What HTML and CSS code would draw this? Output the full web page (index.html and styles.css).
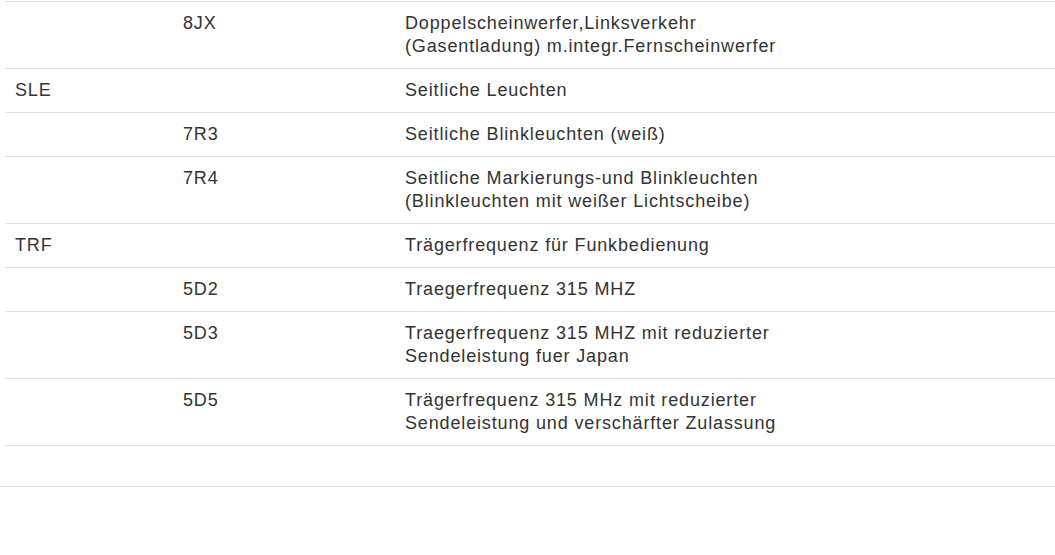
FILE: index.html
```html
<!DOCTYPE html>
<html lang="de">
<head>
<meta charset="utf-8">
<link rel="stylesheet" href="styles.css">
</head>
<body>
<div class="wrap">
  <table class="codes">
    <colgroup><col class="c1"><col class="c2"><col class="c3"></colgroup>
    <tbody>
      <tr><td></td><td>8JX</td><td>Doppelscheinwerfer,Linksverkehr<br>(Gasentladung) m.integr.Fernscheinwerfer</td></tr>
      <tr><td>SLE</td><td></td><td>Seitliche Leuchten</td></tr>
      <tr><td></td><td>7R3</td><td>Seitliche Blinkleuchten (weiß)</td></tr>
      <tr><td></td><td>7R4</td><td>Seitliche Markierungs-und Blinkleuchten<br>(Blinkleuchten mit weißer Lichtscheibe)</td></tr>
      <tr><td>TRF</td><td></td><td>Trägerfrequenz für Funkbedienung</td></tr>
      <tr><td></td><td>5D2</td><td>Traegerfrequenz 315 MHZ</td></tr>
      <tr><td></td><td>5D3</td><td>Traegerfrequenz 315 MHZ mit reduzierter<br>Sendeleistung fuer Japan</td></tr>
      <tr><td></td><td>5D5</td><td>Trägerfrequenz 315 MHz mit reduzierter<br>Sendeleistung und verschärfter Zulassung</td></tr>
    </tbody>
  </table>
</div>
<div class="spacer"></div>
</body>
</html>
```
FILE: styles.css
```css
html, body {
  margin: 0;
  padding: 0;
  background: #fff;
}
body {
  font-family: "Liberation Sans", Arial, sans-serif;
  font-size: 18px;
  line-height: 23px;
  letter-spacing: 0.85px;
  color: #333;
}
.wrap {
  padding: 1px 0 0 5px;
}
.codes {
  width: 100%;
  border-collapse: collapse;
  table-layout: fixed;
}
.c1 { width: 168px; }
.c2 { width: 222px; }
.codes td {
  border-top: 1px solid #dee2e6;
  border-bottom: 1px solid #dee2e6;
  padding: 10px 10px;
  vertical-align: top;
  text-align: left;
  white-space: nowrap;
}
.spacer {
  height: 40px;
  border-bottom: 1px solid #dee2e6;
}
```
